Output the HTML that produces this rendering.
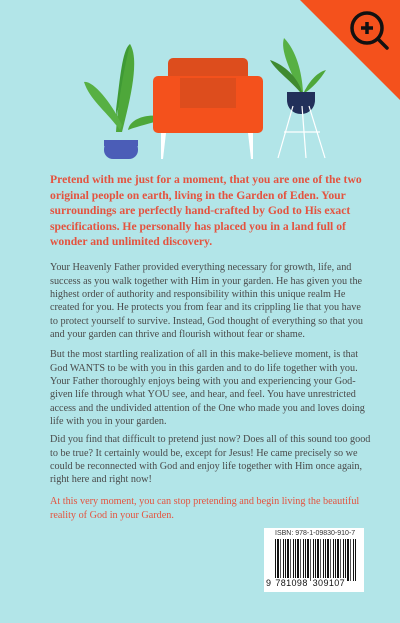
<!DOCTYPE html>
<html><head><style>
*{margin:0;padding:0}
body{width:400px;height:623px;background:#b2e5e8;position:relative;overflow:hidden;font-family:"Liberation Serif",serif}
.p{position:absolute;left:50px;white-space:nowrap;color:#4a4a4a;font-size:10.2px;line-height:13.3px}
.b{color:#e4533f;font-weight:bold;font-size:11.65px;line-height:15.5px;top:172px}
.r{color:#e4533f}
</style></head><body>
<svg width="400" height="170" style="position:absolute;left:0;top:0">
<polygon points="300,0 400,0 400,100" fill="#f4511c"/>
<circle cx="367" cy="28" r="15" fill="none" stroke="#111" stroke-width="3.5"/>
<line x1="378" y1="39" x2="387" y2="48" stroke="#111" stroke-width="3.5" stroke-linecap="round"/>
<path d="M367 22v12M361 28h12" stroke="#111" stroke-width="3.5"/>
<path d="M118 132 C110 100 140 80 130 44 C122 50 120 80 116 110 Z" fill="#3f9a35"/>
<path d="M130 44 C140 60 130 100 122 132 L116 132 C118 100 124 70 130 44Z" fill="#4ea73a"/>
<path d="M120 130 C105 110 90 100 84 82 C92 80 110 100 122 125Z" fill="#57b043"/>
<path d="M128 130 C130 118 150 112 166 118 C150 124 138 126 128 130Z" fill="#4ea73a"/>
<rect x="104" y="140" width="34" height="19" rx="9" fill="#4b5db7"/>
<rect x="104" y="140" width="34" height="6" fill="#4b5db7"/>
<rect x="168" y="58" width="80" height="60" rx="5" fill="#dd4d1d"/>
<rect x="153" y="76" width="110" height="57" rx="5" fill="#f4511c"/>
<rect x="180" y="78" width="56" height="30" fill="#dd4d1d"/>
<path d="M161 133h5l-3 26h-2z" fill="#fff"/>
<path d="M248 133h5v26h-2z" fill="#fff"/>
<path d="M300 92 C290 70 280 50 284 38 C296 50 302 72 303 92Z" fill="#57b043"/>
<path d="M300 92 C290 80 275 70 270 60 C285 65 298 78 302 92Z" fill="#3f8a30"/>
<path d="M304 92 C310 80 318 72 326 70 C320 80 312 88 306 92Z" fill="#4ea73a"/>
<path d="M287 92h28v8c0 8-6 14-14 14s-14-6-14-14z" fill="#22305a"/>
<path d="M293 106 L278 158 M309 106 L325 158 M302 106 L306 158 M284 132h36" stroke="#fff" stroke-width="1.2" fill="none"/>
</svg>
<div class="p b">Pretend with me just for a moment, that you are one of the two<br>original people on earth, living in the Garden of Eden. Your<br>surroundings are perfectly hand-crafted by God to His exact<br>specifications. He personally has placed you in a land full of<br>wonder and unlimited discovery.</div>
<div class="p" style="top:261.4px">Your Heavenly Father provided everything necessary for growth, life, and<br>success as you walk together with Him in your garden. He has given you the<br>highest order of authority and responsibility within this unique realm He<br>created for you. He protects you from fear and its crippling lie that you have<br>to protect yourself to survive. Instead, God thought of everything so that you<br>and your garden can thrive and flourish without fear or shame.</div>
<div class="p" style="top:348.4px">But the most startling realization of all in this make-believe moment, is that<br>God WANTS to be with you in this garden and to do life together with you.<br>Your Father thoroughly enjoys being with you and experiencing your God-<br>given life through what YOU see, and hear, and feel. You have unrestricted<br>access and the undivided attention of the One who made you and loves doing<br>life with you in your garden.</div>
<div class="p" style="top:433.4px">Did you find that difficult to pretend just now? Does all of this sound too good<br>to be true? It certainly would be, except for Jesus! He came precisely so we<br>could be reconnected with God and enjoy life together with Him once again,<br>right here and right now!</div>
<div class="p r" style="top:495.4px">At this very moment, you can stop pretending and begin living the beautiful<br>reality of God in your Garden.</div>
<div style="position:absolute;left:264px;top:528px;width:100px;height:64px;background:#fff">
<div style="position:absolute;left:11px;top:2px;font:7px 'Liberation Sans',sans-serif;color:#333;white-space:nowrap">ISBN: 978-1-09830-910-7</div>
<div style="position:absolute;left:11px;top:11px;width:82px;height:42px;background:repeating-linear-gradient(90deg,#111 0 1px,#fff 1px 2px,#111 2px 4px,#fff 4px 5px,#555 5px 6px,#fff 6px 8px,#111 8px 9px,#fff 9px 10px)"></div>
<div style="position:absolute;left:2px;top:50px;font:9px 'Liberation Sans',sans-serif;color:#111;white-space:nowrap;letter-spacing:0.4px"><span style="background:#fff">9</span> <span style="background:#fff;padding:0 1px">781098</span> <span style="background:#fff;padding:0 1px">309107</span></div>
</div>
</body></html>
